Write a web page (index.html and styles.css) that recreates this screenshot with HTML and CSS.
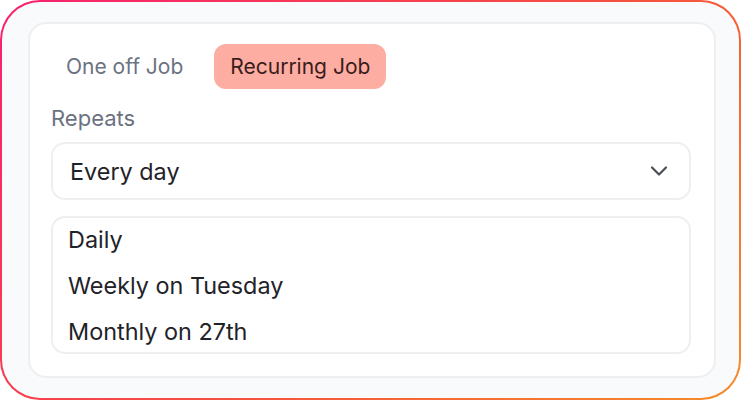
FILE: index.html
```html
<!DOCTYPE html>
<html>

<head>
    <meta charset="UTF-8" />
    <meta name="viewport" content="width=device-width" />
    <title>Job schedule</title>
    <link rel="stylesheet" href="styles.css">
</head>

<body>
    <div class="frame">
        <div class="card">
            <div class="tabs">
                <button class="tab">One off Job</button>
                <button class="tab active">Recurring Job</button>
            </div>

            <label class="label">Repeats</label>
            <div class="select">
                <span>Every day</span>
                <svg class="chevron" width="18" height="12" viewBox="0 0 18 12" fill="none" stroke="#4b4f56" stroke-width="2.2" stroke-linecap="round" stroke-linejoin="round">
                    <path d="M2 2.5l7 7 7-7" />
                </svg>
            </div>

            <ul class="options">
                <li>Daily</li>
                <li>Weekly on Tuesday</li>
                <li>Monthly on 27th</li>
            </ul>
        </div>
    </div>
</body>

</html>
```

FILE: styles.css
```css
body {
    margin: 0;
    font-family: Inter, "Noto Sans", sans-serif;
}

.frame {
    box-sizing: border-box;
    width: 741px;
    height: 400px;
    padding: 20px 23px 20px 26px;
    border: 2px solid transparent;
    border-radius: 40px;
    background: linear-gradient(#f9fafb, #f9fafb) padding-box,
        linear-gradient(135deg, #f7216f, #f6503f 55%, #f68d2a) border-box;
}

.card {
    box-sizing: border-box;
    height: 356px;
    padding: 20px 23px 22px 21px;
    background: white;
    border: 2px solid #eeeff1;
    border-radius: 18px;
}

.tabs {
    display: flex;
    gap: 16px;
    margin-bottom: 17px;
}

.tab {
    height: 45px;
    padding: 0 15px;
    border: none;
    border-radius: 12px;
    background: none;
    font-family: inherit;
    font-size: 21px;
    color: #6b7280;
}

.tab.active {
    padding: 0 16px;
    background: #fdada1;
    color: #3a1c1c;
}

.label {
    display: block;
    font-size: 22px;
    line-height: 24px;
    color: #6b7280;
    margin-bottom: 12px;
}

.select {
    box-sizing: border-box;
    height: 58px;
    display: flex;
    align-items: center;
    justify-content: space-between;
    padding: 0 21px 0 17px;
    border: 2px solid #eeeff1;
    border-radius: 14px;
    font-size: 23.4px;
    color: #1f2328;
}

.options {
    box-sizing: border-box;
    list-style: none;
    margin: 16px 0 0;
    padding: 0 15px;
    height: 138px;
    border: 2px solid #eeeff1;
    border-radius: 14px;
}

.options li {
    height: 46px;
    line-height: 44px;
    font-size: 23.4px;
    color: #1f2328;
}
```
